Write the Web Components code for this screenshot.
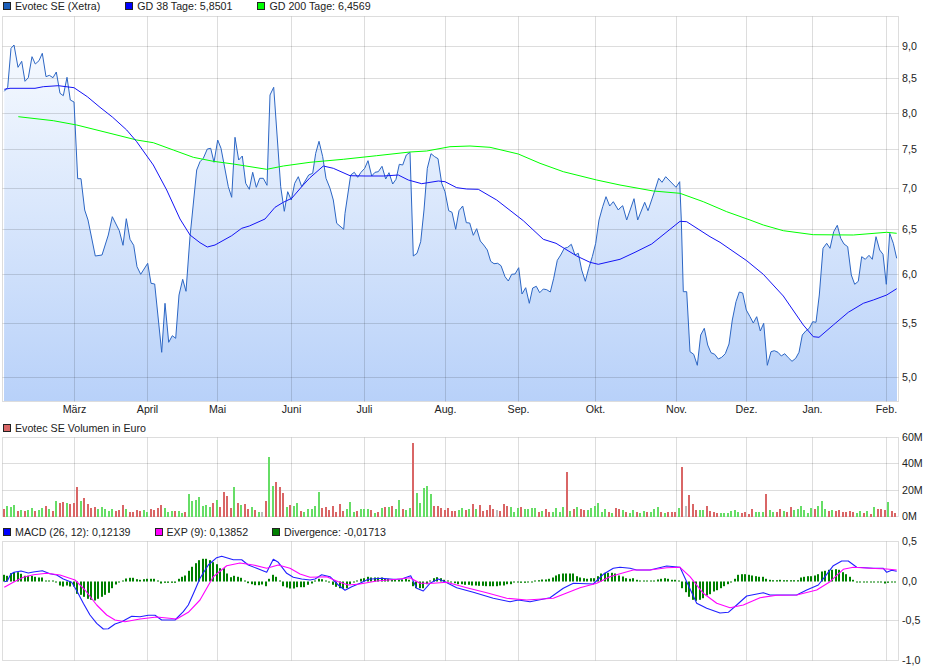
<!DOCTYPE html>
<html lang="de">
<head>
<meta charset="utf-8">
<title>Evotec SE Chart</title>
<style>
  html, body { margin: 0; background: #fff; }
</style>
</head>
<body>
<stock-chart>
  <chart-legend>
    <legend-item color="#1c5fbb">Evotec SE (Xetra)</legend-item>
    <legend-item color="#0000ff">GD 38 Tage: 5,8501</legend-item>
    <legend-item color="#00ff00">GD 200 Tage: 6,4569</legend-item>
  </chart-legend>
  <price-panel></price-panel>
  <chart-legend style="height:16px;margin-bottom:0">
    <legend-item color="#d96666">Evotec SE Volumen in Euro</legend-item>
  </chart-legend>
  <volume-panel></volume-panel>
  <chart-legend style="height:14px;gap:24px">
    <legend-item color="#0000ff">MACD (26, 12): 0,12139</legend-item>
    <legend-item color="#ff00ff">EXP (9): 0,13852</legend-item>
    <legend-item color="#008000">Divergence: -0,01713</legend-item>
  </chart-legend>
  <macd-panel></macd-panel>
</stock-chart>

<script>
// gridlines shared by the three panels (month starts)
const MONTH_X = [74.5, 147.5, 217.5, 291.5, 364.5, 445.5, 518.5, 595.5, 676.5, 746.5, 812.5, 886.5];
const MONTHS = ["März", "April", "Mai", "Juni", "Juli", "Aug.", "Sep.", "Okt.", "Nov.", "Dez.", "Jan.", "Feb."];
const LEFT = 2.5, RIGHT = 898.5;
const STEP = 3.49; // distance between two trading days

// curves, read off the reference in page pixels
const PRICE = [4.3,91.3, 7.7,87.3, 11,48.3, 14,45, 18,67.3, 21.7,61.3, 25,81.3, 28.3,77.7, 32,56.7, 35.3,64, 39,60.7, 42.3,53.3, 46,76.7, 49.3,75.3, 53,77.7, 56.3,72, 60,93.3, 63.3,95.7, 67,77.3, 70.3,100, 74,102, 77.7,178.7, 81,178.7, 84.7,210, 88,220, 95.3,256, 102,255, 108.3,235, 112.3,216.7, 119.3,230.7, 123,245.3, 126.3,218.7, 130,239.3, 133.7,245.3, 137,266.7, 140.7,274.3, 147.7,263.3, 151,283.3, 154.7,284, 161.7,352.3, 165,303.3, 168.7,342.3, 172.3,335.7, 175.7,338.3, 179,295, 182.7,279.3, 186,291.3, 190,236.7, 191.7,220, 196.7,170, 200,161.7, 203.3,158.3, 207.3,149, 210.7,148.3, 214,162.3, 217.7,140, 221,148.3, 228.3,186.7, 231.7,197.3, 235,137.3, 238.7,160, 242.3,156, 245.7,183.3, 249.3,189.3, 252.7,172.3, 256.3,187.3, 259.7,178.3, 263.3,178.3, 267,185.3, 270,95, 273.7,87.3, 280.7,186.7, 284.3,211.3, 287.7,191.7, 291.3,200, 294.7,183.3, 298.3,176.7, 301.7,186.7, 308.7,175, 312.7,173.3, 315.7,153.3, 319,141.3, 322.7,156.7, 326,178.3, 330,188.3, 333.3,200, 336.7,223.3, 343.7,229.3, 345,213.3, 350.7,175, 354.3,172.3, 357.7,177.3, 361,172.3, 364.7,168.3, 368,160.7, 371.7,176, 375,172.3, 378.3,171.7, 382,166.3, 385.7,179, 389,172.7, 392.7,184, 396,179.3, 399.3,164.3, 402.7,165, 406.3,155, 410,152.3, 413.3,256, 417,253.3, 420.7,241.7, 424,210, 427.3,168.3, 431,153.7, 434.7,156.7, 438,158.7, 441.7,183.3, 445,191.7, 448.7,210.7, 452,212.3, 455.7,229.3, 459,210.7, 462.7,206, 466.3,222.7, 469.7,223, 473.3,235.3, 476.7,228.7, 480.3,241, 483.7,245, 487.3,250, 490.7,261.3, 494,263.7, 497.7,263.3, 501,265.7, 505,276.7, 508.3,281, 511.7,274.3, 515,274, 518.7,267.7, 522,294, 525.7,287.7, 529.3,303.3, 532.7,288, 536.3,286.3, 539.7,292.7, 543.3,289, 546.7,289.7, 550.3,292, 553.7,278.3, 557.3,260.3, 560.7,255, 564.3,248.3, 567.7,247.3, 571.3,244.3, 575,255, 578.3,253.3, 581.7,270, 585.3,281.3, 588.7,268.3, 592.3,256.7, 595.7,243.3, 599,220, 602.7,206.7, 606,196.7, 609.7,206, 613.3,201.7, 618.3,210, 620,208, 622.7,205.7, 626.7,220, 634,198.7, 637.7,220, 644.7,202.3, 648,210.7, 655,190, 658.7,178.3, 662,182.3, 665.7,176.7, 676,187.3, 679.7,181.7, 681.3,220, 683.3,291.7, 686.7,291.7, 690,351.7, 693.7,354.3, 697.3,365.3, 700.7,335, 704.3,328.3, 707.7,345, 711,352.7, 714.7,354.3, 718.3,359, 721.7,357.3, 725.3,353.7, 729,344, 732.3,320, 736,301.7, 739.3,292, 742.7,293, 746.3,310, 750,316.7, 753.3,323, 756.7,316.7, 760.3,331, 763.7,323.3, 767.3,365.3, 771,351.7, 774.3,350.7, 778,352.3, 781.3,356, 784.7,353.7, 788.3,357.7, 792,361.3, 795.7,358.3, 799,352.3, 802.3,335, 806,330.7, 809.3,328.3, 812.7,321.7, 816,322.3, 819.3,295, 823,248.3, 826.7,243.3, 830,248.3, 833.7,231.7, 837.3,225.3, 840.7,238.3, 844,244, 847.7,246.7, 851.3,275, 854.7,284.3, 858.3,281.3, 861.7,256.7, 865.3,259.3, 869,255.3, 872.3,259.3, 876,236.7, 879.7,250, 883,254.3, 886.3,284.3, 889.7,233.3, 893.3,243.3, 896.7,258.3];
const GD38 = [4.3,89.3, 10,88.3, 35,88.3, 43.3,86.7, 58.3,85.7, 74,87.7, 87.3,96.7, 100,107.3, 112.7,117.3, 126.7,130, 136.7,141.7, 153.3,165, 166.7,190, 180,219, 190,235, 200,242.7, 207.3,247, 215,245, 231.7,235.7, 241.7,228.3, 249.3,226, 265,219, 275,207.3, 283.3,202.3, 291.7,198.3, 301.7,186.7, 310,177.7, 323.3,166, 333.3,168.3, 350,175.7, 365,176, 383.3,176, 398.3,175, 408.3,180, 421.7,183.7, 438.3,181, 445,181.7, 456.7,187.7, 466.7,189, 478.3,189.3, 496.7,200, 523.3,220.7, 543.3,239.3, 556,243.3, 576.7,256, 590,262.3, 598.3,264.3, 620,259.3, 635,252.3, 651.7,244, 680,221.3, 686.7,221.7, 710,236.7, 720,242.3, 746.7,260.7, 763.3,274.3, 783.3,296, 803.3,325, 813.3,336.7, 819,337.3, 833.3,325, 848.3,312.3, 863.3,303.3, 873.3,300, 886.7,295, 896.7,288.7];
const GD200 = [18.3,116.7, 53.3,120.7, 76.7,125, 110,133.3, 136.7,140, 153.3,142.7, 173.3,150, 193.3,157.3, 213.3,161.3, 233.3,164, 266.7,169.3, 283.3,166, 310,162.3, 343.3,159.3, 376.7,155.7, 410,152, 426.7,151, 450,146.7, 470,146, 490,147.3, 518.3,154, 540,163.3, 563.3,171.7, 596.7,180, 620,185, 653.3,191, 680,193.3, 703.3,201.7, 726.7,211.7, 750,220, 763.3,225, 783.3,230.7, 813.3,234.7, 853.3,235, 886.7,232.3, 896.7,233.3];

// volume: bar height in px with colour letter, three runs that start at the given x
const VOLUME = [
  [4, "r8 g11 g10 g12 r6 g7 r6 g7 g9 r6 g7 g9 r11 g8 r6 g16 r14 r15 g14 r13 r14 r30 g16 r19 r13 r9 r10 g8 g10 g8 g6 g8 r6 r7 r12 g8 r5 r5 r7 r6 g7 g5 r8 r7 r9 r12 g9 g5 g6 r6 g6 g4 r5 g23 g16 g17 g20 g11 g12 g10 r14 g17 r10 r25 r21 r9 g30 r14 g12 r13 r8 g10 r7 g5 n5 r16 g60 g31 r35 r30 r24 g10 r12 g11 g14 r6 g5 g8"],
  [312, "g8 g11 g25 r9 r10 r7 r11 r5 r13 r6 g8 g15 g5 r6 g8 g8 g8 r7 g4 r5 g9 r10 g10 r11 g8 g17 r8 g7 g9 r74 g24 g14 g29 g31 g23 r11 r11 r9 r7 r9 r6 r6 g7 g9 r7 g8 r13 g8 r12 r6 r7 r12 r8 n7 r6 r13 r11 g10 g5 g9 r10 g8 g8 g9 g9 r5 g6 r8 r5 g5 g9 g5 g10 r45 g6 r8 g10 r8 r7 g7 g9 g11 g14 g5 g8 r5 g4 r9 r8"],
  [623, "g7 r5 g4 g7 r5 g4 g6 r5 g5 g8 g10 r5 g4 r5 r5 r5 g9 r50 n11 r22 r13 r7 g7 g7 r11 r6 r5 r4 g4 g4 g4 g6 g7 g5 r4 r5 r3 r8 g5 g5 g5 r23 g7 g5 r5 r8 g6 r5 r10 g7 g8 g11 g7 g4 g9 r8 g11 g16 g8 r6 g7 r6 r7 r5 r5 r6 r5 g4 g6 r4 g6 r3 g10 r8 r8 r7 g15 r6 r4"]
];
const VOL_COLORS = { r: "#d96666", g: "#66dd66", n: "#bdbdbd" };

// MACD panel values are read off a 3x crop: x = ox + z/3, y = oy + z/3
function crop(ox, oy, list) {
  const out = [];
  for (let i = 0; i < list.length; i += 2) {
    out.push(ox + list[i] / 3, oy + list[i + 1] / 3);
  }
  return out;
}
const MACD = [
  ...crop(0, 525, [13,170, 22,168, 32,148, 42,142, 63,138, 85,144, 100,141, 127,137, 150,146, 170,150, 190,162, 215,172, 232,200, 250,235, 270,270, 290,295, 310,312, 325,311, 345,297, 365,290, 395,274, 420,275, 445,271, 465,271, 485,285, 525,285, 550,260, 565,240, 585,195, 600,160, 625,120, 650,98, 665,94, 685,100, 700,104, 725,104, 745,120, 770,130, 800,142, 820,103, 835,112, 860,145, 880,157, 905,162, 930,165]),
  ...crop(310, 525, [15,162, 35,149, 60,155, 85,180, 105,196, 125,185, 150,175, 175,163, 215,160, 250,163, 275,162, 302,152, 320,190, 340,198, 360,175, 385,162, 405,170, 440,188, 490,202, 550,220, 600,230, 625,225, 660,230, 720,218, 760,190, 790,175, 850,177, 880,148, 910,130, 930,127]),
  ...crop(620, 525, [30,130, 50,135, 90,135, 140,123, 180,127, 200,170, 230,235, 260,250, 300,264, 325,262, 350,240, 380,213, 430,203, 450,210, 530,210, 560,195, 595,180, 615,155, 640,122, 665,108, 685,108, 710,127, 760,130, 790,130, 800,142, 815,136, 830,139])
];
const EXP = [
  ...crop(0, 525, [13,187, 40,172, 70,157, 100,149, 140,145, 180,150, 225,165, 255,195, 290,240, 320,270, 345,285, 375,290, 420,282, 470,276, 530,282, 565,262, 600,225, 640,155, 680,122, 720,114, 760,120, 800,130, 835,120, 870,130, 900,147, 930,157]),
  ...crop(310, 525, [50,155, 85,170, 115,180, 150,177, 200,168, 260,163, 300,158, 330,175, 370,175, 410,172, 470,188, 530,203, 590,220, 650,225, 730,220, 810,188, 860,175, 900,155, 930,146]),
  ...crop(620, 525, [40,135, 90,135, 140,128, 180,127, 210,155, 250,205, 290,235, 330,248, 370,240, 420,218, 470,211, 530,210, 590,195, 630,170, 670,133, 700,127, 750,130, 800,132, 830,135])
];
const DIVERGENCE = [
  [4, [20,17,25,28,28,23,17,17,17,14,12,12,3,2,2,-3,-12,-15,-12,-15,-15,-37,-40,-46,-52,-55,-57,-52,-46,-40,-34,-20,-9,-3,2,9,11,11,7,5,7,8,8,8,2,-6,-4,-4,-4,-4,8,14,18,32,44,55,64,68,68,64,58,52,40,40,24,13,17,14,11,2,-5,-8,-11,-11,-9,-14,8,20,14,3,-14,-18,-21,-21,-17,-17,-17,-10]],
  [311.7, [-6,1,8,7,3,-2,-10,-16,-20,-22,-20,-8,-2,3,8,10,14,12,12,12,12,8,8,5,5,5,6,8,5,-14,-20,-20,-20,-8,2,10,13,10,5,2,-3,-5,-8,-8,-10,-10,-12,-12,-13,-13,-14,-14,-14,-14,-12,-12,-8,-8,-2,-2,-4,-4,-3,-2,2,4,6,6,8,12,18,22,24,24,24,24,16,12,10,8,10,10,16,24,26,26,26,24,18]],
  [623, [15,10,8,10,5,2,2,1,1,3,6,8,10,8,5,5,2,-20,-32,-46,-55,-58,-55,-50,-42,-38,-30,-26,-20,-14,-8,-2,8,20,22,22,20,18,16,14,14,8,5,4,4,5,4,4,4,4,4,12,14,16,16,18,22,30,32,35,35,37,35,28,22,14,5,-3,-3,-3,-3,-3,-2,-2,-2,-6,-4,-2,-2]]
];

function pointsAttr(list) {
  const parts = [];
  for (let i = 0; i < list.length; i += 2) {
    parts.push(list[i].toFixed(1) + "," + list[i + 1].toFixed(1));
  }
  return parts.join(" ");
}

function gridLines(top, bottom, rows) {
  let s = "";
  for (const x of [LEFT, ...MONTH_X, RIGHT]) {
    s += `<line x1="${x}" x2="${x}" y1="${top}" y2="${bottom}"/>`;
  }
  for (const y of [top, ...rows, bottom]) {
    s += `<line x1="${LEFT}" x2="${RIGHT}" y1="${y}" y2="${y}"/>`;
  }
  return `<g class="grid">${s}</g>`;
}

function axisLabels(list) {
  return list.map(([t, y]) => `<text x="902" y="${y + 3.5}">${t}</text>`).join("");
}

// base class: one svg strip whose viewBox uses page coordinates
class ChartPanel extends HTMLElement {
  connectedCallback() {
    const y = this.constructor.top, h = this.constructor.height;
    const root = this.attachShadow({ mode: "open" });
    root.innerHTML = `
      <style>
        :host { display: block; height: ${h}px; }
        svg { display: block; width: 940px; height: ${h}px; overflow: visible; }
        text { font: 10.67px "Liberation Sans", Arial, sans-serif; fill: #222; }
        .grid line { stroke: #000; stroke-opacity: .135; stroke-width: 1; }
        polyline { fill: none; stroke-linejoin: round; }
      </style>
      <svg viewBox="0 ${y} 940 ${h}" xmlns="http://www.w3.org/2000/svg">${this.draw()}</svg>`;
  }
}

class PricePanel extends ChartPanel {
  static top = 13;
  static height = 407;
  draw() {
    const rows = [46.5, 78.5, 113.5, 149.5, 188.5, 229.5, 274.5, 323.5, 377.5];
    const area = pointsAttr([4, 401, ...PRICE, 897, 258.3, 897, 401]);
    const months = MONTHS.map((m, i) =>
      `<text x="${MONTH_X[i]}" y="413" text-anchor="middle">${m}</text>`).join("");
    const labels = ["9,0", "8,5", "8,0", "7,5", "7,0", "6,5", "6,0", "5,5", "5,0"].map((t, i) => [t, rows[i]]);
    return `
      <defs>
        <linearGradient id="fill" gradientUnits="userSpaceOnUse" x1="0" y1="17" x2="0" y2="401">
          <stop offset="0" stop-color="#fbfdff"/>
          <stop offset="1" stop-color="#b8d1f9"/>
        </linearGradient>
      </defs>
      <polygon points="${area}" fill="url(#fill)"/>
      ${gridLines(16.5, 401.5, rows)}
      <polyline points="${pointsAttr(PRICE)}" stroke="#2c66c4" stroke-width="1"/>
      <polyline points="${pointsAttr(GD200)}" stroke="#00ff00" stroke-width="1"/>
      <polyline points="${pointsAttr(GD38)}" stroke="#1414f5" stroke-width="1"/>
      ${months}${axisLabels(labels)}`;
  }
}

class VolumePanel extends ChartPanel {
  static top = 436;
  static height = 89;
  draw() {
    let bars = "";
    for (const [start, run] of VOLUME) {
      run.split(" ").forEach((tok, i) => {
        const h = parseInt(tok.slice(1));
        const x = Math.round(start + i * STEP) - 1;
        bars += `<rect x="${x}" y="${517 - h}" width="2" height="${h}" fill="${VOL_COLORS[tok[0]]}"/>`;
      });
    }
    const labels = [["60M", 437], ["40M", 463.5], ["20M", 490], ["0M", 516]];
    return gridLines(437.5, 516.5, [463.5, 490.5]) + bars + axisLabels(labels);
  }
}

class MacdPanel extends ChartPanel {
  static top = 540;
  static height = 130;
  draw() {
    let bars = "";
    for (const [start, run] of DIVERGENCE) {
      run.forEach((v, i) => {
        const h = Math.max(1, Math.abs(v) / 3);
        const x = Math.round(start + i * STEP) - 1;
        const y = v > 0 ? 581.5 - h : 581.5;
        bars += `<rect x="${x}" y="${y.toFixed(1)}" width="2" height="${h.toFixed(1)}" fill="#008000"/>`;
      });
    }
    const labels = [["0,5", 541], ["0,0", 581], ["-0,5", 620.5], ["-1,0", 660]];
    return gridLines(541.5, 660.5, [620.5]) + bars + `
      <polyline points="${pointsAttr(MACD)}" stroke="#2020ff" stroke-width="1.1"/>
      <polyline points="${pointsAttr(EXP)}" stroke="#ff00ff" stroke-width="1.1"/>
      ${axisLabels(labels)}`;
  }
}

class LegendItem extends HTMLElement {
  constructor() {
    super();
    const root = this.attachShadow({ mode: "open" });
    root.innerHTML = `
      <style>
        :host { display: inline-flex; align-items: center; gap: 4px; }
        i { box-sizing: border-box; width: 8px; height: 8px; border: 1px solid #222; background: var(--swatch); }
      </style>
      <i></i><span><slot></slot></span>`;
  }
  connectedCallback() {
    this.style.setProperty("--swatch", this.getAttribute("color"));
  }
}

class ChartLegend extends HTMLElement {
  constructor() {
    super();
    const root = this.attachShadow({ mode: "open" });
    root.innerHTML = `
      <style>
        :host {
          display: flex; align-items: center; gap: 25px;
          height: 12px; margin-bottom: 1px; padding-left: 3px; white-space: nowrap;
          font: 10.67px "Liberation Sans", Arial, sans-serif; color: #222;
        }
      </style>
      <slot></slot>`;
  }
}

class StockChart extends HTMLElement {
  constructor() {
    super();
    const root = this.attachShadow({ mode: "open" });
    root.innerHTML = `
      <style>
        :host { display: flex; flex-direction: column; width: 940px; height: 670px; overflow: hidden; background: #fff; }
      </style>
      <slot></slot>`;
  }
}

customElements.define("price-panel", PricePanel);
customElements.define("volume-panel", VolumePanel);
customElements.define("macd-panel", MacdPanel);
customElements.define("legend-item", LegendItem);
customElements.define("chart-legend", ChartLegend);
customElements.define("stock-chart", StockChart);
</script>
</body>
</html>
